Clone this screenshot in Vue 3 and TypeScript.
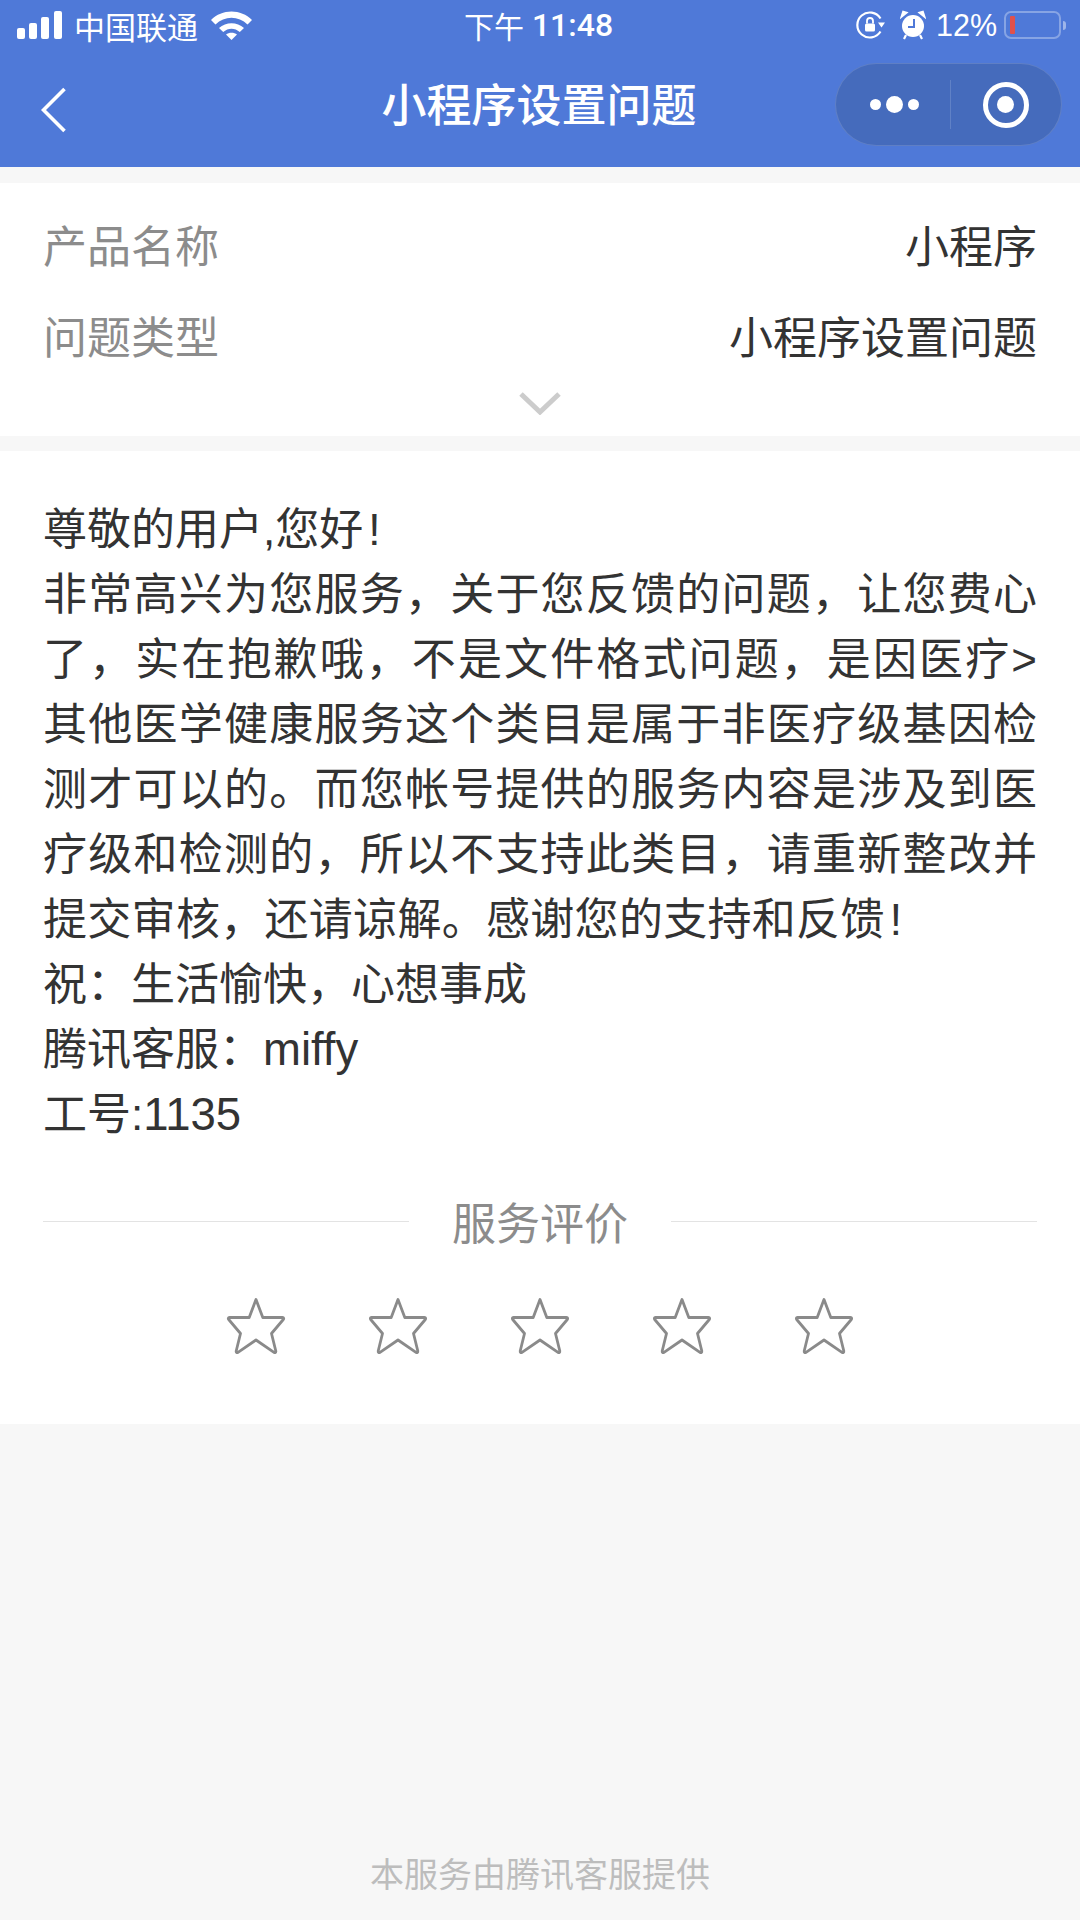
<script setup lang="ts">
interface BodyLine {
  text: string
  tail?: string
  tailKind?: 'mark' | 'latin'
  fit?: boolean
  loose?: boolean
}
const lines: BodyLine[] = [
  { text: '尊敬的用户,您好', tail: '!', tailKind: 'mark' },
  { text: '非常高兴为您服务，关于您反馈的问题，让您费心', fit: true },
  { text: '了，实在抱歉哦，不是文件格式问题，是因医疗>', fit: true },
  { text: '其他医学健康服务这个类目是属于非医疗级基因检', fit: true },
  { text: '测才可以的。而您帐号提供的服务内容是涉及到医', fit: true },
  { text: '疗级和检测的，所以不支持此类目，请重新整改并', fit: true },
  { text: '提交审核，还请谅解。感谢您的支持和反馈', tail: '!', tailKind: 'mark', loose: true },
  { text: '祝：生活愉快，心想事成' },
  { text: '腾讯客服：', tail: 'miffy', tailKind: 'latin' },
  { text: '工号:', tail: '1135', tailKind: 'latin' },
]
const infoRows = [
  { label: '产品名称', value: '小程序' },
  { label: '问题类型', value: '小程序设置问题' },
]
const stars = [1, 2, 3, 4, 5]
</script>

<template>
  <div class="page">
    <header class="head">
      <div class="status">
        <div class="status-left">
          <svg class="signal" width="45" height="28" viewBox="0 0 45 28">
            <rect x="0" y="17" width="8" height="11" rx="2" />
            <rect x="12" y="12" width="8" height="16" rx="2" />
            <rect x="24" y="6" width="8" height="22" rx="2" />
            <rect x="37" y="0" width="8" height="28" rx="2" />
          </svg>
          <span class="carrier">中国联通</span>
          <svg class="wifi" width="41" height="29" viewBox="0 0 41 29">
            <path d="M0 9C11-2.500 30-2.500 41 9L36.500 13.500C27.500 4.500 13.500 4.500 4.500 13.500Z" />
            <path d="M8 17C15 10.500 26 10.500 33 17L28.800 21C23.800 16.500 17.200 16.500 12.200 21Z" />
            <path d="M15 23.500C18 21 23 21 26 23.500L20.500 29Z" />
          </svg>
        </div>
        <div class="clock"><span class="ampm">下午</span> <span class="time">11:48</span></div>
        <div class="status-right">
          <svg width="29" height="30" viewBox="0 0 29 30" class="rot">
            <path d="M24.500 21.500A12.500 12.500 0 1 1 24.500 8.500" fill="none" stroke="#fff" stroke-width="2.200" />
            <path d="M22 12.500h7l-3.500 5z" fill="#fff" />
            <rect x="9" y="13.500" width="10" height="8" rx="1.500" fill="#fff" />
            <path d="M11 13.500v-2.500a3 3 0 0 1 6 0v2.500" fill="none" stroke="#fff" stroke-width="1.800" />
          </svg>
          <svg width="26" height="30" viewBox="0 0 26 30" class="alarm">
            <circle cx="13" cy="16" r="11" fill="#fff" />
            <path d="M14 9v8H8" fill="none" stroke="#4f79d8" stroke-width="2" />
            <path d="M1 7.500 7 2.500 3 1.500ZM25 7.500 19 2.500 23 1.500Z" fill="#fff" stroke="#fff" stroke-width="1.500" />
            <path d="M6 25 4 29M20 25l2 4" stroke="#fff" stroke-width="2.200" />
          </svg>
          <span class="pct">12%</span>
          <div class="battery"><i class="charge"></i></div>
          <i class="nub"></i>
        </div>
      </div>
      <div class="nav">
        <svg class="back" width="26" height="46" viewBox="0 0 26 46">
          <path d="M23.500 2 2.500 23l21 21" fill="none" stroke="#fff" stroke-width="3.600" />
        </svg>
        <h1 class="title">小程序设置问题</h1>
        <div class="capsule">
          <div class="cap-part more">
            <i class="dot"></i><i class="dot big"></i><i class="dot"></i>
          </div>
          <i class="cap-line"></i>
          <div class="cap-part">
            <div class="target"><i></i></div>
          </div>
        </div>
      </div>
    </header>

    <section class="info">
      <div v-for="row in infoRows" :key="row.label" class="info-row">
        <span class="info-label">{{ row.label }}</span>
        <span class="info-value">{{ row.value }}</span>
      </div>
      <svg class="chevron" width="42" height="24" viewBox="0 0 42 24">
        <path d="M2 3 21 21 40 3" fill="none" stroke="#cccccc" stroke-width="5" />
      </svg>
    </section>

    <section class="card">
      <p v-for="(line, i) in lines" :key="i" class="line" :class="{ fit: line.fit, loose: line.loose }">{{ line.text }}<span v-if="line.tail" :class="line.tailKind">{{ line.tail }}</span></p>
      <div class="rate-head">
        <i class="rule"></i>
        <span class="rate-title">服务评价</span>
        <i class="rule"></i>
      </div>
      <div class="stars">
        <svg v-for="s in stars" :key="s" width="60" height="58" viewBox="0 0 60 58">
          <path
            d="M30 2.500 36.800 20.500H56.500C57.800 20.500 58 21.500 57.300 22.500L45.500 36.500 49.800 54C50 55.500 49 56 48 55.300L30 43 12 55.300C11 56 10 55.500 10.200 54L14.500 36.500 2.700 22.500C2 21.500 2.200 20.500 3.500 20.500H23.200Z"
            fill="none"
            stroke="#8a8a8a"
            stroke-width="2.800"
            stroke-linejoin="round"
          />
        </svg>
      </div>
    </section>

    <footer class="foot">本服务由腾讯客服提供</footer>
  </div>
</template>

<style>
html, body { margin: 0; background: #f7f7f7; }
</style>

<style scoped>
.page {
  width: 1080px;
  height: 1920px;
  background: #f7f7f7;
  display: flex;
  flex-direction: column;
  font-family: "Liberation Sans", "Noto Sans CJK SC", sans-serif;
  overflow: hidden;
}
.head {
  height: 167px;
  background: #4f79d8;
  color: #fff;
  display: flex;
  flex-direction: column;
  flex: none;
}
.status {
  height: 50px;
  padding: 0 14px 0 17px;
  display: grid;
  grid-template-columns: 1fr auto 1fr;
  align-items: center;
}
.status-left { display: flex; align-items: center; gap: 12px; }
.signal { fill: #fff; }
.wifi { fill: #fff; margin-left: 1px; }
.carrier { font-size: 31px; }
.clock { display: flex; align-items: center; gap: 8px; margin-right: 6px; }
.ampm { font-size: 30px; }
.time { font-family: Roboto, sans-serif; font-size: 32px; font-weight: 500; }
.status-right { display: flex; align-items: center; justify-content: flex-end; }
.rot { margin-right: 15px; }
.alarm { margin-right: 10px; }
.pct { font-size: 30.500px; margin-right: 7px; }
.battery {
  width: 57px;
  height: 28px;
  box-sizing: border-box;
  border: 2px solid rgba(255, 255, 255, 0.32);
  border-radius: 7px;
  padding: 3px 4px;
  display: flex;
}
.charge { width: 5px; background: #e0514c; border-radius: 1px; }
.nub {
  width: 3px;
  height: 9px;
  margin-left: 2px;
  background: rgba(255, 255, 255, 0.45);
  border-radius: 0 3px 3px 0;
}
.nav {
  position: relative;
  flex: 1;
  display: flex;
  align-items: center;
  justify-content: center;
  padding-bottom: 4px;
}
.back { position: absolute; left: 41px; top: 37px; }
.title { margin: 0 2px 0 0; font-size: 45px; font-weight: 500; line-height: 60px; }
.capsule {
  position: absolute;
  right: 18px;
  top: 13px;
  width: 227px;
  height: 83px;
  box-sizing: border-box;
  border: 1px solid rgba(255, 255, 255, 0.14);
  border-radius: 42px;
  background: #456bbc;
  display: flex;
  align-items: center;
}
.cap-part { flex: 1; display: flex; align-items: center; justify-content: center; }
.more { gap: 5px; padding-left: 3px; }
.dot { width: 11px; height: 11px; border-radius: 50%; background: #fff; }
.dot.big { width: 17px; height: 17px; }
.cap-line { width: 1px; height: 49px; background: rgba(255, 255, 255, 0.15); }
.target {
  width: 46px;
  height: 46px;
  box-sizing: border-box;
  border: 5px solid #fff;
  border-radius: 50%;
  display: flex;
  align-items: center;
  justify-content: center;
}
.target i { width: 17px; height: 17px; border-radius: 50%; background: #fff; }
.info {
  margin-top: 16px;
  height: 253px;
  box-sizing: border-box;
  background: #fff;
  padding: 15px 43px 0;
  display: flex;
  flex-direction: column;
  flex: none;
}
.info-row {
  height: 91px;
  display: flex;
  align-items: center;
  justify-content: space-between;
  font-size: 44px;
}
.info-label { color: #8c8c8c; }
.info-value { color: #333; }
.chevron { align-self: center; margin-top: 11px; }
.card {
  margin-top: 15px;
  height: 973px;
  box-sizing: border-box;
  background: #fff;
  padding: 46px 43px 0;
  flex: none;
}
.line {
  margin: 0;
  font-size: 44px;
  line-height: 65px;
  color: #333;
  white-space: nowrap;
}
.line.fit {
  text-align: justify;
  text-align-last: justify;
  white-space: normal;
}
.line.loose { letter-spacing: 0.300px; }
.mark { margin-left: 5px; }
.latin { font-size: 45.500px; }
.rate-head {
  margin-top: 39px;
  height: 70px;
  display: flex;
  align-items: center;
  gap: 43px;
}
.rule { flex: 1; height: 1px; background: #e3e3e3; }
.rate-title { font-size: 44px; color: #8c8c8c; }
.stars {
  margin-top: 41px;
  display: flex;
  justify-content: center;
  gap: 82px;
}
.foot {
  margin-top: auto;
  padding-bottom: 22px;
  text-align: center;
  font-size: 34px;
  color: #bdbdbd;
  line-height: 46px;
}
</style>
